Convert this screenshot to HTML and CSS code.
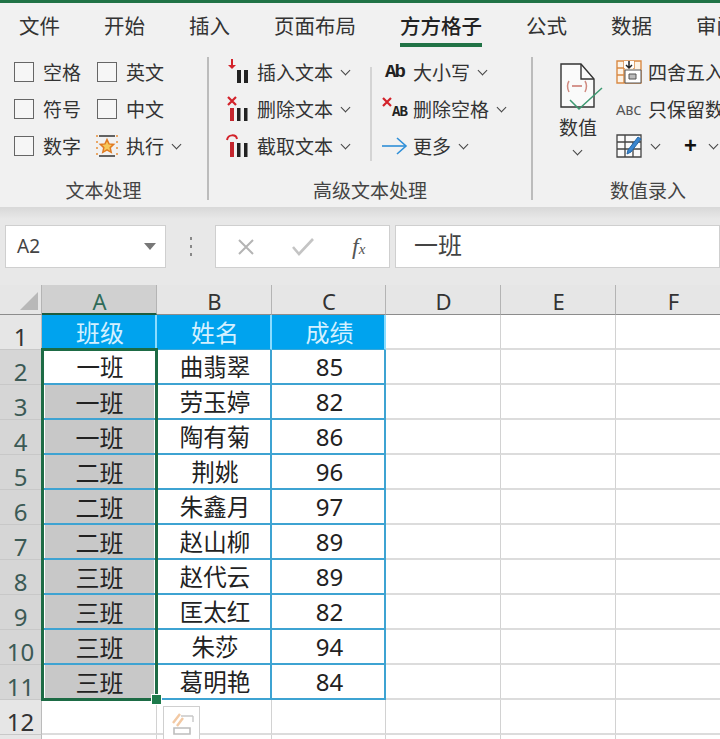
FILE: index.html
```html
<!DOCTYPE html>
<html lang="zh-CN">
<head>
  <meta charset="UTF-8">
  <title>方方格子</title>
  <link rel="stylesheet" href="styles.css">
</head>
<body>
  <div class="tabs">
    <span class="tab">文件</span>
    <span class="tab">开始</span>
    <span class="tab">插入</span>
    <span class="tab">页面布局</span>
    <span class="tab active">方方格子</span>
    <span class="tab">公式</span>
    <span class="tab">数据</span>
    <span class="tab">审阅</span>
  </div>

  <div class="ribbon">
    <div class="group group-text">
      <div class="group-body checks">
        <label class="item"><i class="box"></i>空格</label>
        <label class="item"><i class="box"></i>英文</label>
        <label class="item"><i class="box"></i>符号</label>
        <label class="item"><i class="box"></i>中文</label>
        <label class="item"><i class="box"></i>数字</label>
        <div class="item exec">
          <svg width="24" height="24" viewBox="0 0 24 24">
            <path d="M4 2h16M4 22h16" stroke="#333" stroke-width="1.5"/>
            <path d="M2 1v22M22 1v22" stroke="#e8903a" stroke-width="1.5" stroke-dasharray="2 4"/>
            <path d="M12 5.5l2 4.4 4.7.5-3.5 3.2 1 4.7-4.2-2.4-4.2 2.4 1-4.7-3.5-3.2 4.7-.5z" fill="#f7c85a" stroke="#e07b22" stroke-width="1.5"/>
          </svg>
          执行<i class="chev"></i>
        </div>
      </div>
      <div class="group-name">文本处理</div>
    </div>
    <div class="sep"></div>

    <div class="group group-adv">
      <div class="group-body adv">
        <div class="col col-first">
          <div class="item">
            <svg class="icon" width="24" height="26" viewBox="0 0 24 26">
              <path d="M6 0v8" stroke="#d3222a" stroke-width="2"/><path d="M2 6h8l-4 4z" fill="#d3222a"/>
              <path d="M11 11h4v13h-4zM18 11h4v13h-4z" fill="#222"/>
            </svg>
            插入文本<i class="chev"></i>
          </div>
          <div class="item">
            <svg class="icon" width="24" height="26" viewBox="0 0 24 26">
              <path d="M2 1l8 8M10 1l-8 8" stroke="#d3222a" stroke-width="2.2"/>
              <path d="M4 12h4v13H4z" fill="#c4262e"/>
              <path d="M11 12h3.5v13H11zM18 12h3.5v13H18z" fill="#222"/>
            </svg>
            删除文本<i class="chev"></i>
          </div>
          <div class="item">
            <svg class="icon" width="24" height="26" viewBox="0 0 24 26">
              <path d="M1 7C2 1 10 1 11 6" fill="none" stroke="#d3222a" stroke-width="2"/>
              <path d="M4 9h4v15H4z" fill="#c4262e"/>
              <path d="M11 10h3.5v14H11zM18 10h3.5v14H18z" fill="#222"/>
            </svg>
            截取文本<i class="chev"></i>
          </div>
        </div>
        <div class="sep-small"></div>
        <div class="col">
          <div class="item">
            <span class="icon ab">Ab</span>
            大小写<i class="chev"></i>
          </div>
          <div class="item">
            <svg class="icon icon-wide" width="26" height="26" viewBox="0 0 26 26">
              <path d="M1 2l8 8M9 2l-8 8" stroke="#d3222a" stroke-width="2.2"/>
              <text x="10" y="20" class="ab-small">AB</text>
            </svg>
            删除空格<i class="chev"></i>
          </div>
          <div class="item">
            <svg class="icon icon-wide" width="26" height="20" viewBox="0 0 26 20">
              <path d="M0 10h24" stroke="#2f8fd8" stroke-width="1.6"/>
              <path d="M15 2l9 8-9 8" fill="none" stroke="#2f8fd8" stroke-width="1.6"/>
            </svg>
            更多<i class="chev"></i>
          </div>
        </div>
      </div>
      <div class="group-name">高级文本处理</div>
    </div>
    <div class="sep"></div>

    <div class="group group-num">
      <div class="group-body nums">
        <div class="big-btn">
          <svg width="46" height="50" viewBox="0 0 46 50">
            <path d="M2 1h20l13 15v28H2z" fill="#fafafa" stroke="#333" stroke-width="1.4"/>
            <path d="M22 1v15h13" fill="none" stroke="#333" stroke-width="1.4"/>
            <path d="M10 18q-3 5 0 11M26 18q3 5 0 11" fill="none" stroke="#d08a80" stroke-width="1.5"/>
            <path d="M13 23h10" stroke="#c9736a" stroke-width="1.5"/>
            <path d="M11 37l9 9L43 25" fill="none" stroke="#3d9a72" stroke-width="1.5"/>
          </svg>
          <span>数值</span>
          <i class="chev"></i>
        </div>
        <div class="col">
          <div class="item">
            <svg class="icon icon-grid" width="26" height="24" viewBox="0 0 26 24">
              <path d="M1 1h24v22H1zM8 1v22M18 1v8M1 8h7M1 15h7" fill="#fdf3e6" stroke="#d98a45" stroke-width="1.4"/>
              <path d="M8 1h10v7H8z" fill="#fff"/>
              <path d="M13 1v6M10 5l3 3 3-3" fill="none" stroke="#222" stroke-width="1.5"/>
              <path d="M9 10h16v13H9z" fill="#fff" stroke="#555" stroke-width="1"/>
              <path d="M13 14h7v5h-7z" fill="#bbb" stroke="#555" stroke-width="1"/>
            </svg>
            四舍五入
          </div>
          <div class="item">
            <span class="icon abc">Abc</span>
            只保留数字
          </div>
          <div class="item tools">
            <svg class="icon icon-grid" width="26" height="24" viewBox="0 0 26 24">
              <path d="M1 1h24v22H1zM1 8h24M1 15h24M9 1v22M17 8v15" fill="#fafafa" stroke="#444" stroke-width="1.3"/>
              <path d="M12 16L22 3l3 2-10 13-4 2z" fill="#3a86cf" stroke="#2467a8" stroke-width="1"/>
            </svg>
            <i class="chev"></i>
            <b class="plus">+</b>
            <i class="chev"></i>
          </div>
        </div>
      </div>
      <div class="group-name">数值录入</div>
    </div>
  </div>

  <div class="formula-bar">
    <div class="name-box">A2<i class="drop"></i></div>
    <div class="dots"><i></i><i></i><i></i></div>
    <div class="fn-box">
      <svg width="18" height="16" viewBox="0 0 18 16"><path d="M2 1l14 14M16 1L2 15" stroke="#b4b4b4" stroke-width="2"/></svg>
      <svg width="22" height="18" viewBox="0 0 22 18"><path d="M1 9l6 7L21 1" fill="none" stroke="#c4c4c4" stroke-width="2.6"/></svg>
      <span class="fx">f<small>x</small></span>
    </div>
    <div class="input-box">一班</div>
  </div>

  <div class="sheet">
    <div class="head corner"><i></i></div>
    <div class="head on">A</div><div class="head">B</div><div class="head">C</div><div class="head">D</div><div class="head">E</div><div class="head">F</div>

    <div class="num">1</div><div class="cell title">班级</div><div class="cell title">姓名</div><div class="cell title">成绩</div><div class="cell"></div><div class="cell"></div><div class="cell"></div>
    <div class="num on">2</div><div class="cell data">一班</div><div class="cell data">曲翡翠</div><div class="cell data score">85</div><div class="cell"></div><div class="cell"></div><div class="cell"></div>
    <div class="num on">3</div><div class="cell data gray">一班</div><div class="cell data">劳玉婷</div><div class="cell data score">82</div><div class="cell"></div><div class="cell"></div><div class="cell"></div>
    <div class="num on">4</div><div class="cell data gray">一班</div><div class="cell data">陶有菊</div><div class="cell data score">86</div><div class="cell"></div><div class="cell"></div><div class="cell"></div>
    <div class="num on">5</div><div class="cell data gray">二班</div><div class="cell data">荆姚</div><div class="cell data score">96</div><div class="cell"></div><div class="cell"></div><div class="cell"></div>
    <div class="num on">6</div><div class="cell data gray">二班</div><div class="cell data">朱鑫月</div><div class="cell data score">97</div><div class="cell"></div><div class="cell"></div><div class="cell"></div>
    <div class="num on">7</div><div class="cell data gray">二班</div><div class="cell data">赵山柳</div><div class="cell data score">89</div><div class="cell"></div><div class="cell"></div><div class="cell"></div>
    <div class="num on">8</div><div class="cell data gray">三班</div><div class="cell data">赵代云</div><div class="cell data score">89</div><div class="cell"></div><div class="cell"></div><div class="cell"></div>
    <div class="num on">9</div><div class="cell data gray">三班</div><div class="cell data">匡太红</div><div class="cell data score">82</div><div class="cell"></div><div class="cell"></div><div class="cell"></div>
    <div class="num on">10</div><div class="cell data gray">三班</div><div class="cell data">朱莎</div><div class="cell data score">94</div><div class="cell"></div><div class="cell"></div><div class="cell"></div>
    <div class="num on">11</div><div class="cell data gray">三班</div><div class="cell data">葛明艳</div><div class="cell data score">84</div><div class="cell"></div><div class="cell"></div><div class="cell"></div>
    <div class="num">12</div><div class="cell"></div><div class="cell"></div><div class="cell"></div><div class="cell"></div><div class="cell"></div><div class="cell"></div>
    <div class="num"></div><div class="cell"></div><div class="cell"></div><div class="cell"></div><div class="cell"></div><div class="cell"></div><div class="cell"></div>

    <div class="selection"><i class="handle"></i></div>
    <div class="paste">
      <svg width="26" height="24" viewBox="0 0 26 24">
        <path d="M4 11l7-9M8 14l6-8" stroke="#f2c9a4" stroke-width="2.4"/>
        <path d="M12 4h12M24 4v6" stroke="#c8c8c8" stroke-width="1.4" fill="none"/>
        <path d="M5 16h16v6H5z" fill="none" stroke="#bdbdbd" stroke-width="1.6"/>
      </svg>
    </div>
  </div>
</body>
</html>
```

FILE: styles.css
```css
* {
  box-sizing: border-box;
}

html, body {
  height: 739px;
  overflow: hidden;
}

body {
  margin: 0;
  background: #fff;
  color: #333;
  font-family: "Noto Sans CJK SC", "Noto Sans", sans-serif;
  border-top: 3px solid #217346;
}

i {
  font-style: normal;
}

/* tabs */
.tabs {
  display: flex;
  gap: 44px;
  height: 45px;
  padding: 2px 0 0 19px;
  background: #f1f1f1;
  font-size: 20.5px;
  white-space: nowrap;
  overflow: hidden;
}

.tab {
  height: 43px;
  line-height: 40px;
  flex: none;
}

.tab.active {
  color: #222;
  font-weight: 500;
  border-bottom: 4px solid #217346;
  height: 42px;
}

/* ribbon */
.ribbon {
  display: flex;
  height: 159px;
  background: #f1f1f1;
  font-size: 19px;
  overflow: hidden;
}

.group {
  flex: none;
  padding-top: 5px;
}

.group-text {
  width: 207px;
}

.group-adv {
  width: 322px;
}

.group-num {
  width: 230px;
}

.group-body {
  height: 111px;
}

.group-name {
  height: 41px;
  padding-top: 11px;
  line-height: 30px;
  text-align: center;
  color: #444;
}

.sep {
  flex: none;
  width: 2px;
  height: 143px;
  margin-top: 9px;
  background: #bcbcbc;
}

.sep-small {
  flex: none;
  width: 2px;
  height: 94px;
  margin: 14px 10px 0 0;
  background: #d4d4d4;
}

.item {
  display: flex;
  align-items: center;
  height: 37px;
  white-space: nowrap;
}

.checks {
  display: grid;
  grid-template-columns: 83px auto;
  padding-left: 14px;
}

.box {
  width: 20px;
  height: 20px;
  margin-right: 9px;
  border: 1.5px solid #666;
  background: #f6f6f6;
}

.exec svg {
  margin: 0 7px 0 -2px;
}

.chev {
  flex: none;
  display: inline-block;
  width: 7px;
  height: 7px;
  margin: -3px 0 0 9px;
  border-right: 1.5px solid #444;
  border-bottom: 1.5px solid #444;
  transform: rotate(45deg);
}

.adv {
  display: flex;
  padding-left: 17px;
}

.col-first {
  width: 144px;
}

.icon {
  flex: none;
  margin-right: 7px;
}

.icon-wide {
  margin-right: 5px;
}

.icon-grid {
  margin-right: 6px;
}

.ab {
  width: 24px;
  padding-left: 3px;
  font: bold 19px "Liberation Mono", monospace;
  letter-spacing: -2px;
  color: #222;
}

.ab-small {
  font: bold 14px "Liberation Mono", monospace;
  letter-spacing: -1px;
  fill: #222;
}

.abc {
  width: 26px;
  margin-right: 6px;
  font: 15px "Noto Sans", sans-serif;
  font-variant: small-caps;
  color: #555;
}

.nums {
  display: flex;
  padding-left: 20px;
}

.big-btn {
  flex: none;
  width: 63px;
  display: flex;
  flex-direction: column;
  align-items: flex-start;
  padding: 10px 0 0 6px;
}

.big-btn span {
  line-height: 28px;
}

.big-btn .chev {
  margin: 6px 0 0 15px;
}

.tools .chev {
  margin-left: 4px;
}

.plus {
  width: 22px;
  margin-left: 25px;
  font: bold 22px "Liberation Sans", sans-serif;
  color: #111;
}

/* formula bar */
.formula-bar {
  display: flex;
  height: 78px;
  padding: 18px 0 0 5px;
  background: linear-gradient(#d8d8d8, #e8e8e8 12px);
}

.name-box, .fn-box, .input-box {
  height: 43px;
  background: #fff;
  border: 1px solid #cfcfcf;
}

.name-box {
  position: relative;
  width: 161px;
  padding-left: 11px;
  font: 19px/41px "Noto Sans", sans-serif;
  color: #444;
}

.drop {
  position: absolute;
  right: 9px;
  top: 17px;
  border: 6px solid transparent;
  border-top: 7px solid #777;
  border-bottom: 0;
}

.dots {
  display: flex;
  flex-direction: column;
  justify-content: center;
  gap: 5px;
  width: 49px;
  height: 43px;
  padding-left: 24px;
}

.dots i {
  width: 2px;
  height: 3px;
  background: #888;
}

.fn-box {
  display: flex;
  align-items: center;
  width: 175px;
  padding-left: 21px;
}

.fn-box svg + svg {
  margin-left: 37px;
}

.fx {
  margin-left: 38px;
  font: italic 24px "Liberation Serif", serif;
  color: #555;
}

.fx small {
  font-size: 15px;
}

.input-box {
  flex: 1;
  margin-left: 5px;
  padding-left: 18px;
  line-height: 35px;
  font-size: 24px;
  color: #444;
}

/* sheet */
.sheet {
  position: relative;
  display: grid;
  grid-template-columns: 42px 115px 115px 114px 115px 115px 115px;
  grid-template-rows: 30px repeat(13, 35px);
  background: #fff;
}

.head {
  display: flex;
  align-items: center;
  justify-content: center;
  padding: 3px 0 0 1px;
  background: #e6e6e6;
  border-right: 1px solid #b4b4b4;
  border-bottom: 1px solid #8c8c8c;
  font: 22px "Noto Sans", sans-serif;
  color: #333;
}

.head.on {
  background: #d0d0d0;
  color: #2f6b58;
  border-bottom: 2px solid #1d5c3e;
}

.corner {
  position: relative;
}

.corner i {
  position: absolute;
  left: 20px;
  top: 7px;
  border-style: solid;
  border-width: 0 0 18px 18px;
  border-color: transparent transparent #b8b8b8 transparent;
}

.num {
  display: flex;
  align-items: center;
  justify-content: center;
  padding-top: 8px;
  background: #e6e6e6;
  border-right: 1px solid #bbb;
  border-bottom: 1px solid #c8c8c8;
  font: 24px "Noto Sans", sans-serif;
  color: #333;
}

.num.on {
  background: #d6d6d6;
  color: #3c5a55;
}

.cell {
  display: flex;
  align-items: center;
  justify-content: center;
  padding: 0 0 2px 3px;
  border-right: 1px solid #d2d2d2;
  border-bottom: 2px solid #dcdcdc;
  font-size: 24px;
  color: #222;
}

.title {
  background: #00a3ee;
  color: #d3f0ff;
  border-right: 2px solid #8adcff;
  border-bottom: 1px solid #37a7d8;
}

.data {
  border-right: 2px solid #3ea3d2;
  border-bottom: 2px solid #3ea3d2;
  font-size: 23.5px;
}

.score {
  padding-bottom: 0;
  font: 24px "Noto Sans", sans-serif;
}

.gray {
  padding: 0 1px 0 3px;
  font-size: 24px;
  background: #c8c8c8;
  background-clip: content-box;
}

.selection {
  position: absolute;
  left: 41px;
  top: 63px;
  width: 117px;
  height: 353px;
  border: 3px solid #1d6b45;
}

.handle {
  position: absolute;
  right: -7px;
  bottom: -7px;
  width: 11px;
  height: 11px;
  background: #1d7a4b;
  border: 1px solid #fff;
}

.paste {
  position: absolute;
  left: 163px;
  top: 421px;
  display: flex;
  align-items: center;
  justify-content: center;
  width: 37px;
  height: 36px;
  background: #fff;
  border: 1px solid #cfcfcf;
}
```
